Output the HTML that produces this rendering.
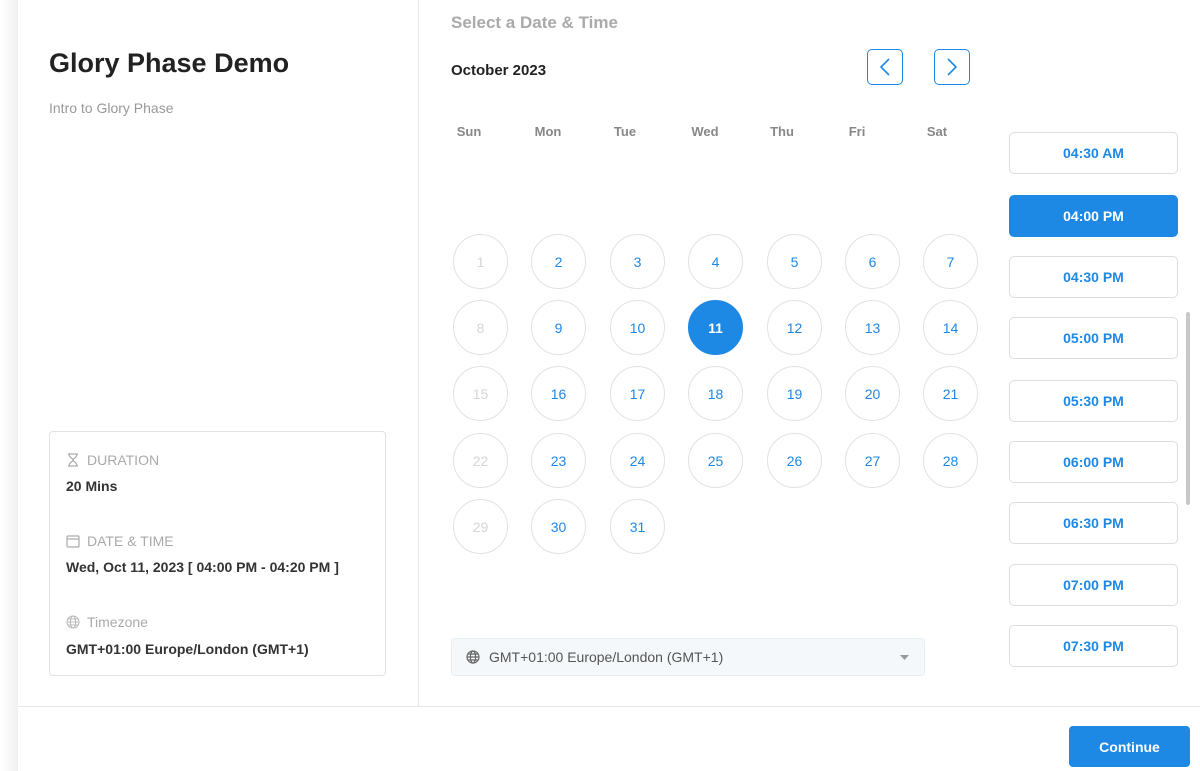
<!DOCTYPE html>
<html><head><style>
*{box-sizing:border-box;margin:0;padding:0}
body{width:1200px;height:771px;background:#fff;font-family:"Liberation Sans",Arial,sans-serif;position:relative;overflow:hidden}
.abs{position:absolute}
.strip{left:0;top:0;width:18px;height:771px;background:linear-gradient(to right,#fff,#f0f0f0)}
.vline{left:418px;top:0;width:1px;height:706px;background:#e6e6e6}
.hline{left:18px;top:706px;width:1182px;height:1px;background:#e6e6e6}
h1{position:absolute;left:49px;top:48px;font-size:27px;font-weight:bold;color:#222}
.sub{left:49px;top:100px;font-size:14px;color:#999}
.card{left:49px;top:431px;width:337px;height:245px;border:1px solid #e3e3e3;border-radius:4px}
.lbl{font-size:14px;color:#aaa;left:16px;display:flex;align-items:center;gap:7px}
.val{font-size:14px;font-weight:bold;color:#333;left:16px}
.title{left:451px;top:13px;font-size:17px;font-weight:bold;color:#aaa}
.month{left:451px;top:62px;font-size:15px;font-weight:bold;color:#222}
.nav{width:36px;height:36px;border:1px solid #1e88e5;border-radius:5px;top:49px;display:flex;align-items:center;justify-content:center}
.dh{top:124px;font-size:13px;font-weight:bold;color:#888;width:60px;text-align:center}
.d{width:55px;height:55px;border:1px solid #e2e2e2;border-radius:50%;display:flex;align-items:center;justify-content:center;font-size:14px;color:#1e88e5}
.d.dis{color:#d5d5d5}
.d.sel{background:#1e88e5;color:#fff;border-color:#1e88e5;font-weight:bold}
.t{left:1009px;width:169px;height:42px;border:1px solid #ddd;border-radius:5px;display:flex;align-items:center;justify-content:center;font-size:14px;font-weight:bold;color:#1e88e5}
.t.sel{background:#1e88e5;color:#fff;border-color:#1e88e5}
.tz{left:451px;top:638px;width:474px;height:38px;background:#f5f8fa;border:1px solid #eaeef0;border-radius:3px;display:flex;align-items:center;padding-left:14px;font-size:14px;color:#555;gap:9px}
.btn{left:1069px;top:726px;width:121px;height:41px;background:#1e88e5;border-radius:4px;color:#fff;font-weight:bold;font-size:14px;display:flex;align-items:center;justify-content:center}
.sb{left:1186px;top:312px;width:4px;height:193px;background:#c8c8c8;border-radius:2px}
</style></head><body>
<div class="abs strip"></div>
<div class="abs vline"></div>
<div class="abs hline"></div>
<h1>Glory Phase Demo</h1>
<div class="abs sub">Intro to Glory Phase</div>
<div class="abs card">
 <div class="abs lbl" style="top:20px"><svg width="14" height="14" viewBox="0 0 14 14" fill="none" stroke="#aaa" stroke-width="1.2"><path d="M2 1h10M2 13h10M3 1c0 4 4 4 4 6s-4 2-4 6M11 1c0 4-4 4-4 6s4 2 4 6"/></svg>DURATION</div>
 <div class="abs val" style="top:46px">20 Mins</div>
 <div class="abs lbl" style="top:101px"><svg width="14" height="14" viewBox="0 0 14 14" fill="none" stroke="#aaa" stroke-width="1.2"><rect x="1" y="2" width="12" height="11" rx="1"/><path d="M1 5h12"/></svg>DATE &amp; TIME</div>
 <div class="abs val" style="top:127px">Wed, Oct 11, 2023 [ 04:00 PM - 04:20 PM ]</div>
 <div class="abs lbl" style="top:182px"><svg width="14" height="14" viewBox="0 0 14 14" fill="none" stroke="#bbb" stroke-width="1.1"><circle cx="7" cy="7" r="6"/><ellipse cx="7" cy="7" rx="2.6" ry="6"/><path d="M1 7h12M2 4h10M2 10h10"/></svg>Timezone</div>
 <div class="abs val" style="top:209px">GMT+01:00 Europe/London (GMT+1)</div>
</div>
<div class="abs title">Select a Date &amp; Time</div>
<div class="abs month">October 2023</div>
<div class="abs nav" style="left:867px"><svg width="14" height="20" viewBox="0 0 14 20" fill="none" stroke="#1e88e5" stroke-width="1.6"><path d="M11 2L3 10l8 8"/></svg></div>
<div class="abs nav" style="left:934px"><svg width="14" height="20" viewBox="0 0 14 20" fill="none" stroke="#1e88e5" stroke-width="1.6"><path d="M3 2l8 8-8 8"/></svg></div>
<div class="abs dh" style="left:439px">Sun</div><div class="abs dh" style="left:518px">Mon</div><div class="abs dh" style="left:595px">Tue</div><div class="abs dh" style="left:675px">Wed</div><div class="abs dh" style="left:752px">Thu</div><div class="abs dh" style="left:827px">Fri</div><div class="abs dh" style="left:907px">Sat</div>
<div id="cal"></div>
<script>
var xs=[480,558,637,715,794,872,950],ys=[261,327,393,460,526],h='';
for(var n=1;n<=31;n++){var i=n-1,c=i%7,r=Math.floor(i/7);var cls='d'+(c==0?' dis':'')+(n==11?' sel':'');
h+='<div class="abs '+cls+'" style="left:'+(xs[c]-27)+'px;top:'+(ys[r]-27)+'px">'+n+'</div>';}
document.getElementById('cal').innerHTML=h;
</script>
<div class="abs t" style="top:132px">04:30 AM</div>
<div class="abs t sel" style="top:195px">04:00 PM</div>
<div class="abs t" style="top:256px">04:30 PM</div>
<div class="abs t" style="top:317px">05:00 PM</div>
<div class="abs t" style="top:380px">05:30 PM</div>
<div class="abs t" style="top:441px">06:00 PM</div>
<div class="abs t" style="top:502px">06:30 PM</div>
<div class="abs t" style="top:564px">07:00 PM</div>
<div class="abs t" style="top:625px">07:30 PM</div>
<div class="abs sb"></div>
<div class="abs tz"><svg width="14" height="14" viewBox="0 0 14 14" fill="none" stroke="#666" stroke-width="1.2"><circle cx="7" cy="7" r="6"/><ellipse cx="7" cy="7" rx="2.6" ry="6"/><path d="M1 7h12M2 4h10M2 10h10"/></svg>GMT+01:00 Europe/London (GMT+1)
<svg class="abs" style="left:448px;top:16px" width="9" height="6" viewBox="0 0 9 6"><path d="M0 0h9L4.5 5z" fill="#999"/></svg></div>
<div class="abs btn">Continue</div>
</body></html>
